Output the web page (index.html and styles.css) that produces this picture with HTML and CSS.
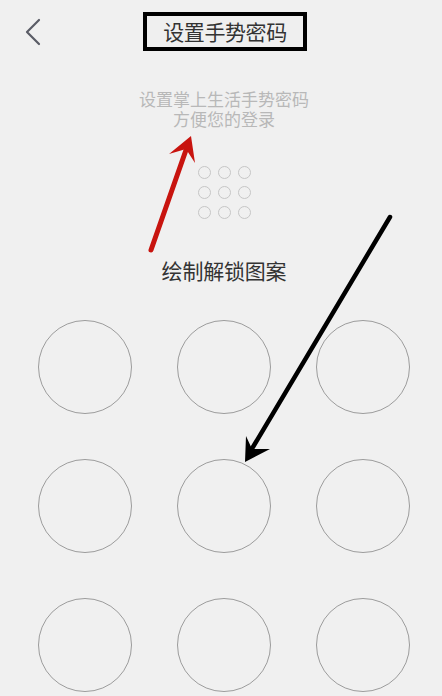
FILE: index.html
```html
<!DOCTYPE html>
<html lang="zh-CN">
<head>
<meta charset="utf-8">
<title>设置手势密码</title>
<link rel="stylesheet" href="styles.css">
</head>
<body>
<div class="page">
  <header class="header">
    <button class="back" aria-label="返回">
      <svg width="18" height="28" viewBox="0 0 18 28"><polyline points="15,2 3,14 15,26" fill="none" stroke="#5a5c66" stroke-width="2.2" stroke-linecap="round" stroke-linejoin="round"/></svg>
    </button>
    <h1 class="title">设置手势密码</h1>
    <span class="spacer"></span>
  </header>

  <p class="hint">设置掌上生活手势密码<br>方便您的登录</p>

  <div class="mini-grid">
    <span></span><span></span><span></span>
    <span></span><span></span><span></span>
    <span></span><span></span><span></span>
  </div>

  <p class="label">绘制解锁图案</p>

  <div class="pad">
    <span></span><span></span><span></span>
    <span></span><span></span><span></span>
    <span></span><span></span><span></span>
  </div>
</div>

<svg class="annot" width="442" height="696" viewBox="0 0 442 696">
  <line x1="151" y1="250" x2="186" y2="150" stroke="#c8140f" stroke-width="5" stroke-linecap="round"/>
  <polygon points="191,136 169,154 186,149 195,163" fill="#c8140f"/>
  <line x1="390" y1="217" x2="250" y2="452" stroke="#000" stroke-width="4.5" stroke-linecap="round"/>
  <polygon points="245,462 246,436 252,449 270,449" fill="#000"/>
</svg>
</body>
</html>
```

FILE: styles.css
```css
html, body {
  margin: 0;
  padding: 0;
  background: #f0f0f0;
}
body {
  width: 442px;
  height: 696px;
  overflow: hidden;
  position: relative;
  font-family: "Noto Sans CJK SC", "Noto Sans", sans-serif;
}
.page {
  padding: 12px 0 0 6px;
  display: flex;
  flex-direction: column;
  align-items: center;
}
.header {
  width: 100%;
  display: grid;
  grid-template-columns: 1fr auto 1fr;
  align-items: center;
  height: 39px;
}
.back {
  justify-self: start;
  margin-left: 18px;
  padding: 0;
  border: 0;
  background: none;
  display: flex;
  align-items: center;
  height: 28px;
}
.title {
  margin: 0 0 0 2px;
  box-sizing: border-box;
  width: 164px;
  height: 39px;
  border: 4px solid #000;
  background: #efefef;
  font-size: 21px;
  font-weight: normal;
  color: #333;
  line-height: 30px;
  text-align: center;
  letter-spacing: -0.4px;
}
.hint {
  margin: 38px 0 0;
  font-size: 17px;
  line-height: 20px;
  color: #b8b8b8;
  text-align: center;
}
.mini-grid {
  margin-top: 37px;
  display: grid;
  grid-template-columns: repeat(3, 13px);
  grid-auto-rows: 13px;
  gap: 7px;
}
.mini-grid span {
  box-sizing: border-box;
  border: 1.2px solid #c6c6c6;
  border-radius: 50%;
}
.label {
  margin: 39px 0 0;
  font-size: 21px;
  line-height: 24px;
  color: #333;
  letter-spacing: -0.2px;
}
.pad {
  margin-top: 38px;
  display: grid;
  grid-template-columns: repeat(3, 94px);
  grid-auto-rows: 94px;
  column-gap: 45px;
  row-gap: 45px;
}
.pad span {
  box-sizing: border-box;
  border: 1.6px solid #9c9c9c;
  border-radius: 50%;
}
.annot {
  position: absolute;
  left: 0;
  top: 0;
  pointer-events: none;
}
```
